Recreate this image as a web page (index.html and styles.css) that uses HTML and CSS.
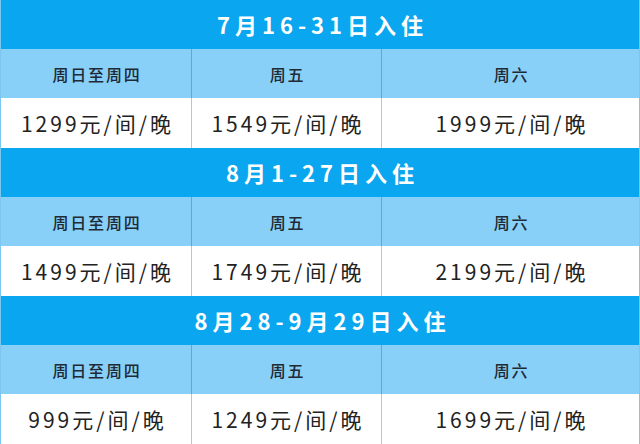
FILE: index.html
```html
<!DOCTYPE html>
<html lang="zh">
<head>
<meta charset="utf-8">
<link rel="stylesheet" href="styles.css">
</head>
<body>
<div class="page">
  <section class="block">
    <div class="title">7月16-31日入住</div>
    <div class="grid">
      <div class="head">周日至周四</div>
      <div class="head">周五</div>
      <div class="head">周六</div>
      <div class="val">1299元/间/晚</div>
      <div class="val">1549元/间/晚</div>
      <div class="val">1999元/间/晚</div>
    </div>
  </section>
  <section class="block">
    <div class="title">8月1-27日入住</div>
    <div class="grid">
      <div class="head">周日至周四</div>
      <div class="head">周五</div>
      <div class="head">周六</div>
      <div class="val">1499元/间/晚</div>
      <div class="val">1749元/间/晚</div>
      <div class="val">2199元/间/晚</div>
    </div>
  </section>
  <section class="block">
    <div class="title">8月28-9月29日入住</div>
    <div class="grid">
      <div class="head">周日至周四</div>
      <div class="head">周五</div>
      <div class="head">周六</div>
      <div class="val">999元/间/晚</div>
      <div class="val">1249元/间/晚</div>
      <div class="val">1699元/间/晚</div>
    </div>
  </section>
</div>
</body>
</html>
```
FILE: styles.css
```css
html, body {
  margin: 0;
  padding: 0;
  background: #ffffff;
}
.page {
  width: 640px;
  height: 444px;
  display: flex;
  flex-direction: column;
  font-family: "Noto Sans CJK SC", "Noto Sans", sans-serif;
  box-sizing: border-box;
  border-left: 1px solid #7cc6ef;
  border-right: 1px solid #7cc6ef;
  overflow: hidden;
}
.block {
  display: flex;
  flex-direction: column;
  height: 148px;
}
.title {
  height: 49px;
  background: #0aa6ef;
  color: #ffffff;
  font-size: 22px;
  font-weight: 700;
  letter-spacing: 5px;
  text-align: center;
  line-height: 49px;
  padding-left: 5px;
}
.grid {
  display: grid;
  grid-template-columns: 190px 190px 1fr;
  grid-template-rows: 49px 50px;
}
.head {
  background: #89d0f9;
  color: #1e2a36;
  font-size: 16px;
  font-weight: 500;
  letter-spacing: 1.8px;
  display: flex;
  align-items: center;
  justify-content: center;
  border-left: 1px solid #5ba9d9;
  padding-left: 2px;
}
.val {
  background: #ffffff;
  color: #222222;
  font-size: 21px;
  letter-spacing: 3px;
  display: flex;
  align-items: center;
  justify-content: center;
  border-left: 1px solid #c4c4c4;
  padding-left: 3px;
}
.head:first-child,
.val:nth-child(4) {
  border-left: none;
}
```
